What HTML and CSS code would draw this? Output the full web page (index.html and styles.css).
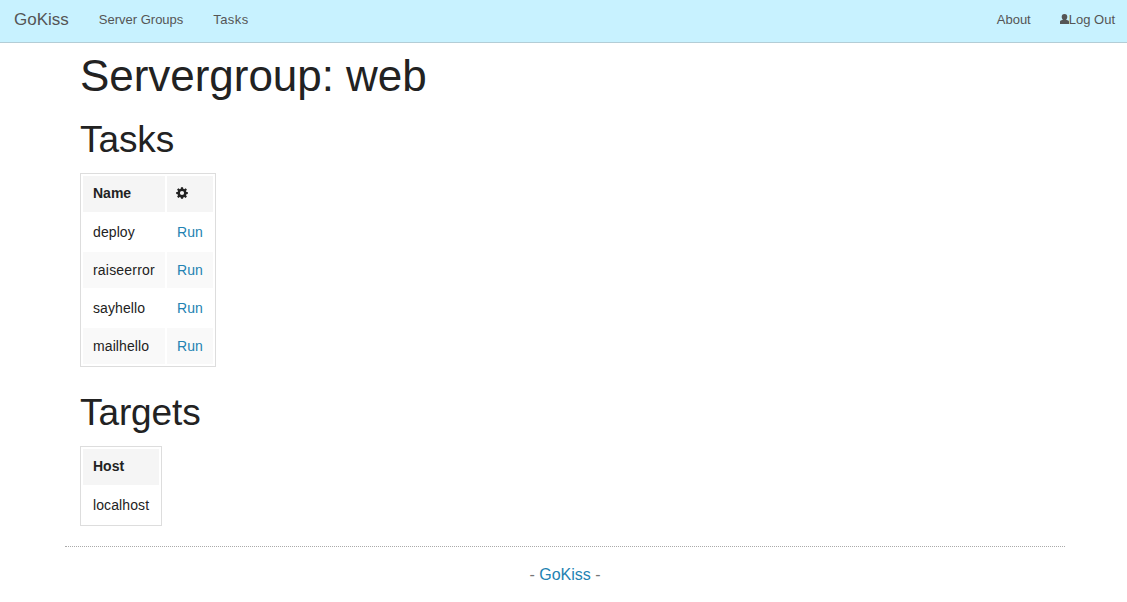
FILE: index.html
```html
<!DOCTYPE html>
<html lang="en">
<head>
<meta charset="utf-8">
<title>GoKiss</title>
<link rel="stylesheet" href="styles.css">
</head>
<body>
<nav class="topbar">
  <a class="brand" href="#">GoKiss</a>
  <a class="nav-groups" href="#">Server Groups</a>
  <a class="nav-tasks" href="#">Tasks</a>
  <a class="nav-about" href="#">About</a>
  <a class="nav-logout" href="#"><svg class="user-icon" viewBox="0 0 9 10"><path d="M4.500 0C6.500 0 7.300 1.200 7.300 2.800C7.300 4.200 6.800 5.200 6 5.800L8.300 6.600Q9 6.900 9 7.800V10H0V7.800Q0 6.900 .7 6.600L3 5.800C2.200 5.200 1.700 4.200 1.700 2.800C1.700 1.200 2.500 0 4.500 0Z"/></svg>Log Out</a>
</nav>
<main class="content">
  <h1>Servergroup: web</h1>
  <h2>Tasks</h2>
  <table class="tasks">
    <thead><tr><th>Name</th><th><svg class="cog-icon" viewBox="0 0 12 12"><path fill-rule="evenodd" d="M5 .3h2l.3 1.500 1 .4 1.300-.9 1.300 1.300-.9 1.300.4 1 1.400.2v1.900l-1.400.3-.4 1 .9 1.200-1.300 1.400-1.300-.9-1 .4-.3 1.400H5l-.3-1.400-1-.4-1.300.9-1.300-1.400.9-1.200-.4-1L.2 7V5.100l1.400-.2.4-1-.9-1.300 1.300-1.300 1.300.9 1-.4ZM6 3.900a2.100 2.100 0 1 0 0 4.200a2.100 2.100 0 1 0 0-4.200Z"/></svg></th></tr></thead>
    <tbody>
      <tr><td>deploy</td><td><a href="#">Run</a></td></tr>
      <tr><td class="wide-name">raiseerror</td><td><a href="#">Run</a></td></tr>
      <tr><td>sayhello</td><td><a href="#">Run</a></td></tr>
      <tr><td>mailhello</td><td><a href="#">Run</a></td></tr>
    </tbody>
  </table>
  <h2>Targets</h2>
  <table class="targets">
    <thead><tr><th>Host</th></tr></thead>
    <tbody><tr><td>localhost</td></tr></tbody>
  </table>
</main>
<footer class="footer">- <a href="#">GoKiss</a> -</footer>
</body>
</html>
```

FILE: styles.css
```css
* { box-sizing: border-box; }
body { margin: 0; background: #fff; color: #222; font-family: "Liberation Sans", Arial, sans-serif; font-size: 16px; }
a { color: #2382b2; text-decoration: none; }
.topbar { display: flex; height: 43px; padding: 0 12px 3px 14px; align-items: center; background: #c8f2ff; border-bottom: 1px solid #b3cdd6; font-size: 13px; }
.topbar a { color: #555; white-space: nowrap; }
.topbar .brand { font-size: 17px; }
.nav-groups { margin-left: 30px; }
.nav-tasks { margin-left: 30px; letter-spacing: .4px; }
.nav-about { margin-left: auto; }
.nav-logout { margin-left: 29px; }
.user-icon { width: 9px; height: 10px; fill: #555; vertical-align: 0; }
.content { width: 1000px; margin-left: 65px; padding: 0 15px; }
h1, h2 { font-weight: 400; }
h1 { font-size: 44px; margin: 2px 0 7px; line-height: 62px; letter-spacing: -.04px; }
h2 { font-size: 37px; margin: 0 0 7px; line-height: 52px; letter-spacing: -.1px; }
table { border: 1px solid #ddd; border-collapse: separate; border-spacing: 2px; margin-bottom: 20px; font-size: 14px; line-height: 18px; }
.tasks { width: 136px; table-layout: fixed; }
.tasks th:first-child { width: 82px; }
.targets { width: 82px; }
th { height: 36px; background: #f5f5f5; padding: 8px 10px 10px; text-align: left; font-weight: 700; }
td { height: 36px; padding: 9px 10px; letter-spacing: .1px; }
.wide-name { letter-spacing: .2px; }
tr:nth-child(even) td { background: #f9f9f9; }
.cog-icon { display: block; width: 12px; height: 12px; margin-left: -1px; fill: #222; }
.footer { width: 1000px; margin: 0 0 0 65px; padding-top: 18px; border-top: 1px dotted #aaa; text-align: center; line-height: 20px; color: #777; }
```
